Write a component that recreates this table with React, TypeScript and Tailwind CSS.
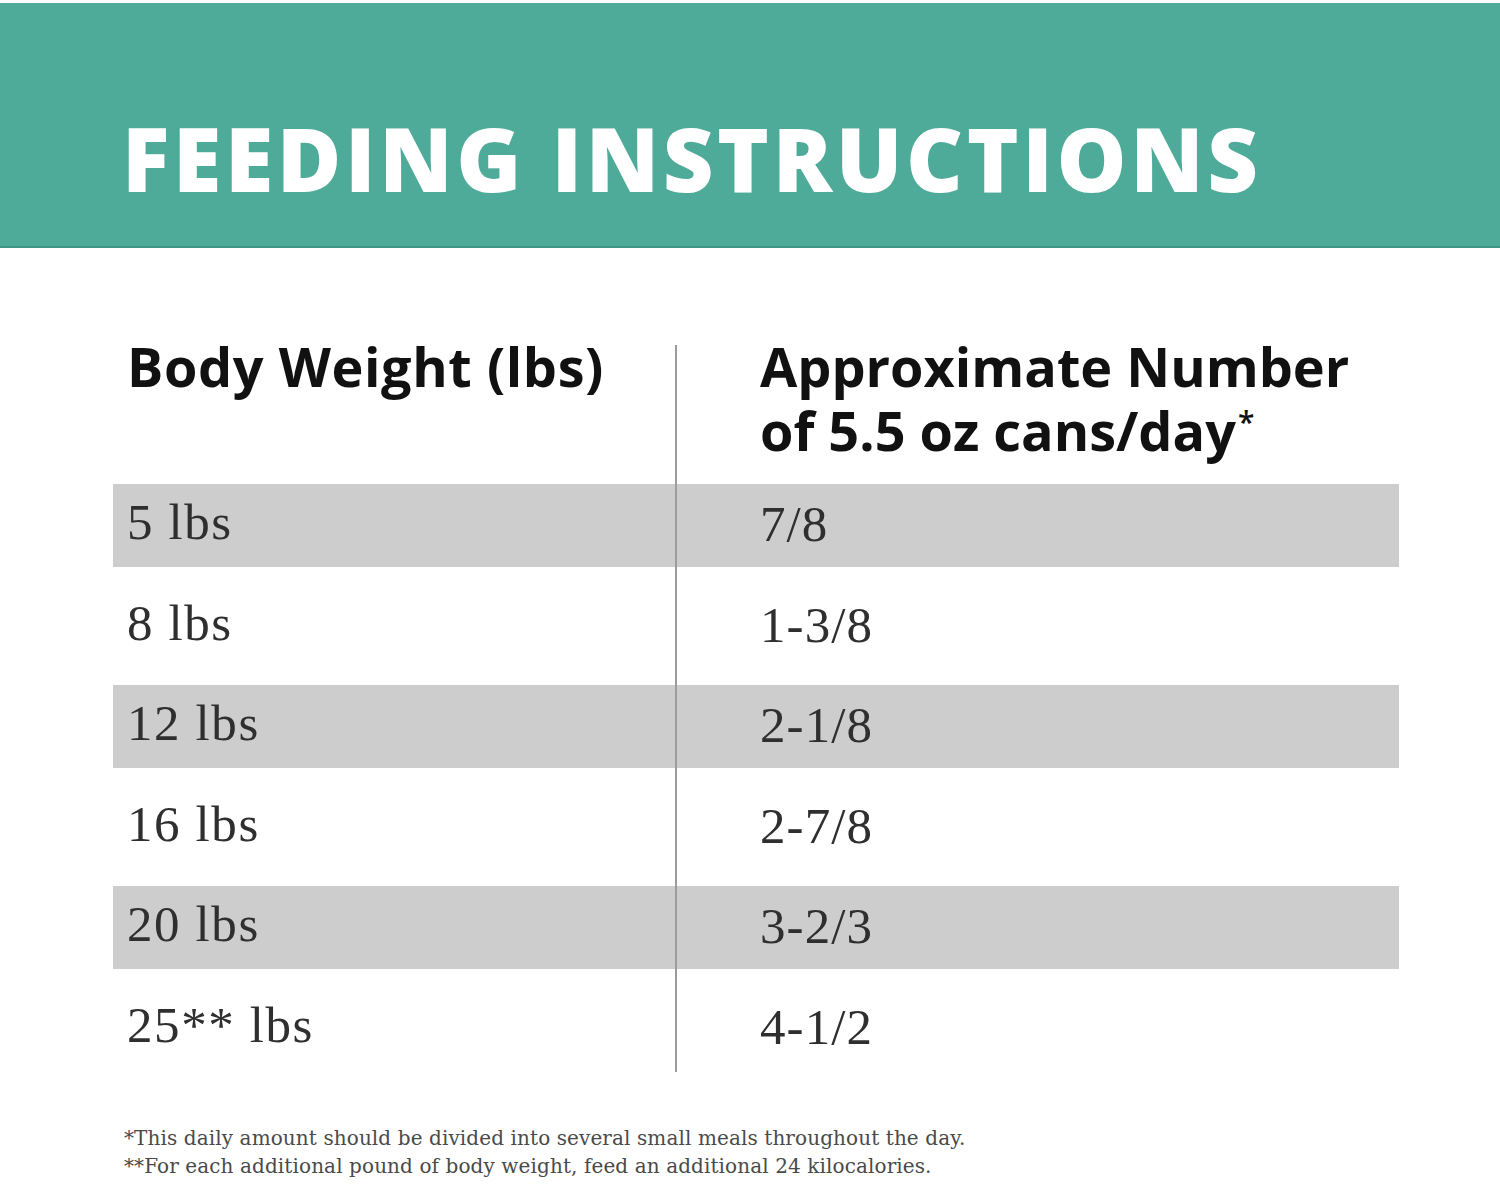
const rows = [
  { weight: "5 lbs", cans: "7/8", shaded: true },
  { weight: "8 lbs", cans: "1-3/8", shaded: false },
  { weight: "12 lbs", cans: "2-1/8", shaded: true },
  { weight: "16 lbs", cans: "2-7/8", shaded: false },
  { weight: "20 lbs", cans: "3-2/3", shaded: true },
  { weight: "25** lbs", cans: "4-1/2", shaded: false },
];

const sans = "font-['Open_Sans',sans-serif]";
const serif = "font-['Liberation_Serif',serif]";

export default function App() {
  return (
    <div className="w-[1500px] h-[1195px] bg-white overflow-hidden">
      <div className="mt-[3px] h-[245px] bg-[#4fab99] border-b-2 border-[#3f9585] flex items-end pl-[122px] pb-[44px]">
        <h1
          className={`${sans} text-[88px] font-extrabold leading-none tracking-[3.6px] text-white`}
        >
          FEEDING INSTRUCTIONS
        </h1>
      </div>

      <div className="mt-[97px] ml-[113px] w-[1286px] flex">
        {/* weight column */}
        <div className="w-[564px] border-r-2 border-[#9c9c9c] pb-[2px]">
          <div className="h-[139px] pl-[14px]">
            <p
              className={`${sans} relative -top-[11px] text-[54px] font-bold leading-[64px] tracking-[0.6px] text-[#111]`}
            >
              Body Weight (lbs)
            </p>
          </div>
          <div className="flex flex-col gap-[17.5px]">
            {rows.map((r) => (
              <div
                key={r.weight}
                className={`h-[83px] flex items-center pl-[14px] ${
                  r.shaded ? "bg-[#cdcdcd]" : ""
                }`}
              >
                <span
                  className={`${serif} text-[51px] leading-none tracking-[1.6px] text-[#2f2f2f] -mt-[6px]`}
                >
                  {r.weight}
                </span>
              </div>
            ))}
          </div>
        </div>

        {/* cans column */}
        <div className="flex-1">
          <div className="h-[139px] pl-[83px]">
            <p
              className={`${sans} relative -top-[11px] text-[54px] font-bold leading-[64px] text-[#111]`}
            >
              Approximate Number
              <br />
              of 5.5 oz cans/day
              <span className="relative -top-[18px] ml-[2px] text-[30px] font-semibold">*</span>
            </p>
          </div>
          <div className="flex flex-col gap-[17.5px]">
            {rows.map((r) => (
              <div
                key={r.cans}
                className={`h-[83px] flex items-center pl-[83px] ${
                  r.shaded ? "bg-[#cdcdcd]" : ""
                }`}
              >
                <span
                  className={`${serif} text-[51px] leading-none tracking-[1.1px] text-[#2f2f2f] -mt-[2px]`}
                >
                  {r.cans}
                </span>
              </div>
            ))}
          </div>
        </div>
      </div>

      <div
        className={`font-['DejaVu_Serif',serif] mt-[52px] ml-[124px] text-[20px] leading-[28px] tracking-[0.1px] text-[#4a4a4a]`}
      >
        <p>*This daily amount should be divided into several small meals throughout the day.</p>
        <p>**For each additional pound of body weight, feed an additional 24 kilocalories.</p>
      </div>
    </div>
  );
}
